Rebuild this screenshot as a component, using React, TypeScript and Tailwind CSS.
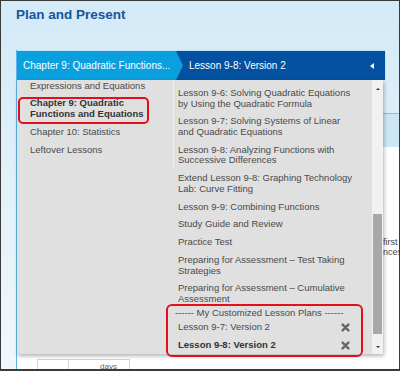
import React from 'react';

const chapters = [
  { label: "Expressions and Equations" },
  { label: "Chapter 9: Quadratic Functions and Equations", active: true },
  { label: "Chapter 10: Statistics" },
  { label: "Leftover Lessons" }
];

const lessons = [
  "Lesson 9-6: Solving Quadratic Equations by Using the Quadratic Formula",
  "Lesson 9-7: Solving Systems of Linear and Quadratic Equations",
  "Lesson 9-8: Analyzing Functions with Successive Differences",
  "Extend Lesson 9-8: Graphing Technology Lab: Curve Fitting",
  "Lesson 9-9: Combining Functions",
  "Study Guide and Review",
  "Practice Test",
  "Preparing for Assessment – Test Taking Strategies",
  "Preparing for Assessment – Cumulative Assessment"
];

const customPlans = [
  { label: "Lesson 9-7: Version 2" },
  { label: "Lesson 9-8: Version 2", active: true }
];

const CloseIcon = () => (
  <svg width="9" height="9" viewBox="0 0 10 10" className="shrink-0">
    <path d="M1.8 1.8 L8.2 8.2 M8.2 1.8 L1.8 8.2" stroke="#666" strokeWidth={2.7} strokeLinecap="round" />
  </svg>
);

export default function App() {
  return (
    <div className="w-[400px] h-[371px] overflow-hidden border-x border-t border-b-2 border-[#3a3a3a] bg-gradient-to-b from-[#d3eaf7] to-[#f1f8fc] flex flex-col font-['Liberation_Sans',Arial,sans-serif]">
      {/* Page title */}
      <div className="h-[49px] pl-[15px] pt-[5.5px] text-[13.5px] leading-[16px] font-bold text-[#1a549b]">
        Plan and Present
      </div>

      {/* Panel */}
      <div className="flex-1 flex flex-col ml-[15px] border-l border-[#5ab5e6] relative">
        {/* Breadcrumb bar */}
        <div className="h-[30px] w-[369px] flex border-t border-r border-[#c4e3f3] bg-[#0351a0] text-[10px] text-white">
          <div className="w-[166px] flex items-center pl-[6px] bg-[#0aa0de] [clip-path:polygon(0_0,159px_0,100%_50%,159px_100%,0_100%)]">
            <span className="whitespace-nowrap">Chapter 9: Quadratic Functions...</span>
          </div>
          <div className="flex-1 flex items-center pl-[6px]">
            <span className="whitespace-nowrap">Lesson 9-8: Version 2</span>
            <div className="ml-auto mr-[11px] w-0 h-0 border-y-[3.5px] border-y-transparent border-r-[4px] border-r-white" />
          </div>
        </div>

        {/* Page content behind the menu */}
        <div className="h-[33px]" />
        <div className="h-[1px] bg-[#7cc4ea]" />
        <div className="h-[33px] bg-[#cbe6f5]" />
        <div className="flex-1 flex flex-col bg-white">
          <div className="pl-[366px] pt-[91px] text-[9px] leading-[9.5px] text-[#444] whitespace-nowrap">
            <div>first r</div>
            <div>nces</div>
          </div>
          <div className="mt-auto ml-[20px] flex h-[10px] text-[8px] leading-[8px] text-[#666]">
            <div className="w-[31px] border-l border-t border-[#d4d4d4]" />
            <div className="w-[62px] border-x border-t border-[#d4d4d4] pl-[31px] pt-[3px]">days</div>
          </div>
        </div>

        {/* Dropdown menu */}
        <div className="absolute top-[30px] left-0 w-[366px] h-[274px] flex bg-[#e0e0e0] shadow-[1px_2px_4px_rgba(0,0,0,0.3)] text-[9.5px] text-[#4a4a4a]">
          {/* Chapters */}
          <div className="w-[157px] self-start border-r border-dotted border-white pb-[8px] overflow-hidden">
            <div className="-mt-[3px]">
              {chapters.map(ch => (
                <div key={ch.label} className="relative py-[3.6px] pl-[13px] pr-[2px] leading-[10.6px]">
                  {ch.active ? (
                    <>
                      <span className="font-bold text-[#333]">{ch.label}</span>
                      <div className="absolute top-[2px] left-[1px] w-[131px] h-[27px] border-2 border-[#e3101c] rounded-[5px]" />
                    </>
                  ) : (
                    ch.label
                  )}
                </div>
              ))}
            </div>
          </div>

          {/* Lessons */}
          <div className="flex-1 pl-[4px] pt-[4.5px]">
            {lessons.map(l => (
              <div key={l} className="w-[176px] py-[3.6px] leading-[10.6px]">{l}</div>
            ))}
            <div className="relative">
              <div className="-ml-[3px] leading-[10.6px] whitespace-nowrap">------ My Customized Lesson Plans ------</div>
              {customPlans.map(p => (
                <div key={p.label} className="w-[172px] flex items-center justify-between py-[3.5px] leading-[10.6px]">
                  <span className={p.active ? "font-bold text-[#333]" : ""}>{p.label}</span>
                  <CloseIcon />
                </div>
              ))}
              <div className="absolute -top-[4px] -left-[12px] w-[197px] h-[53px] border-2 border-[#e3101c] rounded-[6px]" />
            </div>
          </div>

          {/* Scrollbar */}
          <div className="w-[11px] bg-[#f1f1f1] flex flex-col items-center">
            <div className="mt-[8px] w-0 h-0 border-x-[2.5px] border-x-transparent border-b-[2.5px] border-b-[#333]" />
            <div className="mt-[124px] w-[9px] h-[120px] bg-[#a8a8a8]" />
            <div className="mt-[12px] w-0 h-0 border-x-[2.5px] border-x-transparent border-t-[2.5px] border-t-[#333]" />
          </div>
        </div>
      </div>
    </div>
  );
}
